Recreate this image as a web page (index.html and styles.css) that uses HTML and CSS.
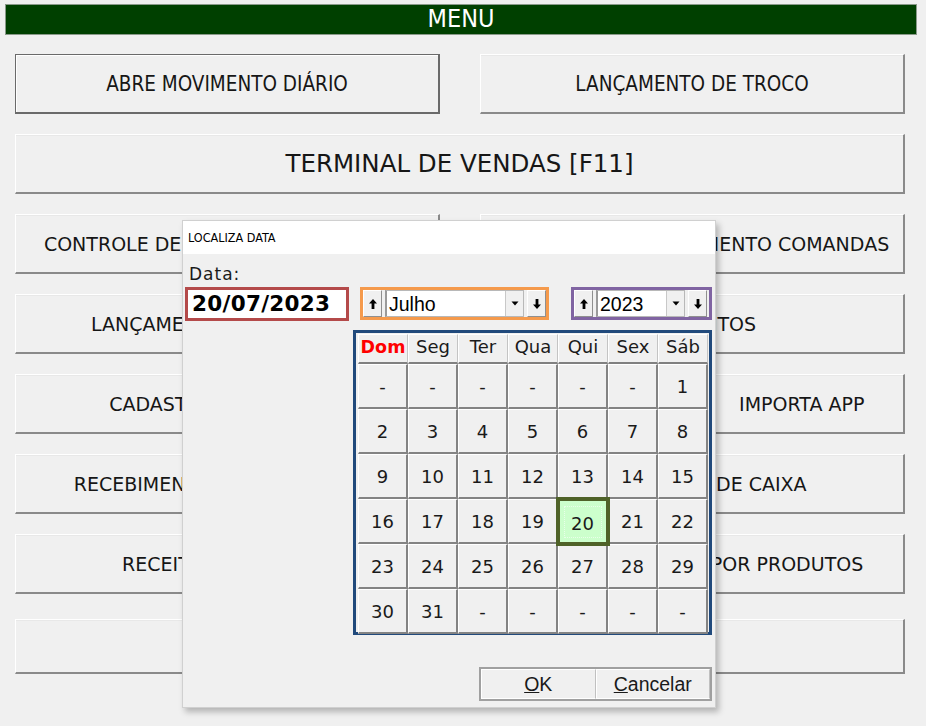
FILE: index.html
```html
<!DOCTYPE html>
<html lang="pt-BR">
<head>
<meta charset="utf-8">
<title>Menu</title>
<link rel="stylesheet" href="styles.css">
</head>
<body>
<div class="screen">
  <div class="header">MENU</div>
  <div class="menu">
    <button class="mbtn focused">ABRE MOVIMENTO DIÁRIO</button>
    <button class="mbtn">LANÇAMENTO DE TROCO</button>
    <button class="mbtn wide big">TERMINAL DE VENDAS [F11]</button>
    <button class="mbtn v">CONTROLE DE CONTAS DOS CLIENTES</button>
    <button class="mbtn v">CONTROLE DE LANÇAMENTO COMANDAS</button>
    <button class="mbtn v">LANÇAMENTO DE DESPESAS</button>
    <button class="mbtn v">VER DÉBITOS</button>
    <button class="mbtn v">CADASTRO DE CLIENTES</button>
    <div class="split">
      <button class="mbtn v">EXPORTA APP</button>
      <button class="mbtn v">IMPORTA APP</button>
    </div>
    <button class="mbtn v">RECEBIMENTOS DE CREDIÁRIOS</button>
    <button class="mbtn v">FECHAMENTO DE CAIXA</button>
    <button class="mbtn v">RECEITAS - DESPESAS</button>
    <button class="mbtn v">CONSULTA VENDAS POR PRODUTOS</button>
    <button class="mbtn last"></button>
    <button class="mbtn last"></button>
  </div>

  <div class="dialog">
    <div class="dlg-title">LOCALIZA DATA</div>
    <div class="dlg-body">
      <div class="lbl">Data:</div>
      <div class="ctrl-row">
        <div class="date-box"><span class="date-val">20/07/2023</span></div>
        <div class="month-box">
          <span class="arrow-btn"><svg width="10" height="12" viewBox="0 0 10 12"><path d="M5 1 L1 5.5 H3.6 V11 H6.4 V5.5 H9 Z" fill="#000"/></svg></span>
          <span class="combo combo-month"><span class="combo-text">Julho</span><span class="drop"><svg width="8" height="5" viewBox="0 0 8 5"><path d="M0.5 0.5 H7.5 L4 4.5 Z" fill="#000"/></svg></span></span>
          <span class="arrow-btn"><svg width="10" height="12" viewBox="0 0 10 12"><path d="M5 11 L1 6.5 H3.6 V1 H6.4 V6.5 H9 Z" fill="#000"/></svg></span>
        </div>
        <div class="year-box">
          <span class="arrow-btn"><svg width="10" height="12" viewBox="0 0 10 12"><path d="M5 1 L1 5.5 H3.6 V11 H6.4 V5.5 H9 Z" fill="#000"/></svg></span>
          <span class="combo combo-year"><span class="combo-text">2023</span><span class="drop"><svg width="8" height="5" viewBox="0 0 8 5"><path d="M0.5 0.5 H7.5 L4 4.5 Z" fill="#000"/></svg></span></span>
          <span class="arrow-btn"><svg width="10" height="12" viewBox="0 0 10 12"><path d="M5 11 L1 6.5 H3.6 V1 H6.4 V6.5 H9 Z" fill="#000"/></svg></span>
        </div>
      </div>
      <div class="calendar">
        <div class="cal-grid">
          <div class="hd dom">Dom</div><div class="hd">Seg</div><div class="hd">Ter</div><div class="hd">Qua</div><div class="hd">Qui</div><div class="hd">Sex</div><div class="hd">Sáb</div>
          <div class="d">-</div><div class="d">-</div><div class="d">-</div><div class="d">-</div><div class="d">-</div><div class="d">-</div><div class="d">1</div>
          <div class="d">2</div><div class="d">3</div><div class="d">4</div><div class="d">5</div><div class="d">6</div><div class="d">7</div><div class="d">8</div>
          <div class="d">9</div><div class="d">10</div><div class="d">11</div><div class="d">12</div><div class="d">13</div><div class="d">14</div><div class="d">15</div>
          <div class="d">16</div><div class="d">17</div><div class="d">18</div><div class="d">19</div><div class="d sel"><span class="focus">20</span></div><div class="d">21</div><div class="d">22</div>
          <div class="d">23</div><div class="d">24</div><div class="d">25</div><div class="d">26</div><div class="d">27</div><div class="d">28</div><div class="d">29</div>
          <div class="d">30</div><div class="d">31</div><div class="d">-</div><div class="d">-</div><div class="d">-</div><div class="d">-</div><div class="d">-</div>
        </div>
      </div>
      <div class="dlg-btns">
        <button class="dbtn"><u>O</u>K</button>
        <button class="dbtn"><u>C</u>ancelar</button>
      </div>
    </div>
  </div>
</div>
</body>
</html>
```

FILE: styles.css
```css
* { box-sizing: border-box; }

html, body {
  margin: 0;
  padding: 0;
  width: 926px;
  height: 726px;
  overflow: hidden;
  background: #f0f0f0;
}

.screen {
  position: relative;
  width: 926px;
  height: 726px;
  padding: 4px 0 0 5px;
  font-family: "DejaVu Sans Condensed", "DejaVu Sans", sans-serif;
  color: #1a1a1a;
}

.header {
  width: 912px;
  height: 31px;
  background: #004000;
  border: 1px solid #8a9a8a;
  color: #ffffff;
  font-size: 25px;
  line-height: 28px;
  text-align: center;
}

.menu {
  display: grid;
  grid-template-columns: 425px 425px;
  column-gap: 40px;
  row-gap: 20px;
  grid-auto-rows: 60px;
  margin: 19px 0 0 10px;
}

.mbtn {
  margin: 0;
  padding: 0;
  background: #f0f0f0;
  border-top: 1px solid #ffffff;
  border-left: 1px solid #ffffff;
  border-right: 2px solid #8a8a8a;
  border-bottom: 2px solid #8a8a8a;
  box-shadow: inset 0 1px 0 #e8e8e8;
  font-family: "DejaVu Sans Condensed", "DejaVu Sans", sans-serif;
  font-size: 20.5px;
  color: #161616;
  white-space: nowrap;
  overflow: hidden;
  text-align: center;
}

.mbtn.v {
  font-family: "DejaVu Sans", sans-serif;
  font-size: 19px;
}

.mbtn.focused {
  border: 1px solid #6a6a6a;
  border-right: 2px solid #6a6a6a;
  border-bottom: 2px solid #6a6a6a;
  box-shadow: inset 1px 1px 0 #ffffff;
}

.mbtn.wide { grid-column: 1 / 3; }

.mbtn.big {
  font-family: "DejaVu Sans", sans-serif;
  font-size: 24.5px;
}

.mbtn.last { margin-top: 5px; }

.split {
  display: flex;
  gap: 14px;
}

.split .mbtn { flex: 1; }

/* Dialog */
.dialog {
  position: absolute;
  left: 182px;
  top: 220px;
  width: 534px;
  height: 488px;
  background: #f0f0f0;
  border: 1px solid #d0d0d0;
  box-shadow: 3px 4px 6px rgba(0, 0, 0, 0.25);
}

.dlg-title {
  height: 33px;
  background: #ffffff;
  padding: 9px 0 0 5px;
  font-family: "DejaVu Sans Condensed", "DejaVu Sans", sans-serif;
  font-size: 12.5px;
  color: #000;
}

.dlg-body {
  padding: 10px 0 0 2px;
}

.lbl {
  margin-left: 4px;
  height: 23px;
  font-family: "DejaVu Sans", sans-serif;
  font-size: 17px;
  letter-spacing: 1px;
  color: #1a1a1a;
}

.ctrl-row {
  display: flex;
  align-items: flex-start;
  height: 34px;
}

.date-box {
  width: 164px;
  height: 34px;
  border: 3px solid #b44a4a;
  background: #ffffff;
  padding: 0 0 0 4px;
  margin-right: 11px;
}

.date-val {
  font-family: "DejaVu Sans", sans-serif;
  font-weight: bold;
  font-size: 21.5px;
  line-height: 27px;
  color: #000;
  letter-spacing: 0.3px;
}

.month-box, .year-box {
  display: flex;
  align-items: center;
  gap: 3px;
  height: 33px;
  border: 3px solid #f59a4c;
}

.month-box { width: 189px; margin-right: 22px; }
.year-box { width: 141px; border-color: #8064a2; }

.arrow-btn {
  display: flex;
  align-items: center;
  justify-content: center;
  width: 19px;
  height: 27px;
  background: #f0f0f0;
  border-top: 1px solid #ffffff;
  border-left: 1px solid #ffffff;
  border-right: 1px solid #8f8f8f;
  border-bottom: 1px solid #8f8f8f;
}

.combo {
  display: flex;
  align-items: center;
  height: 27px;
  background: #ffffff;
  border: 1px solid #b8b8b8;
  border-left: 2px solid #9a9a9a;
}

.combo-month { width: 139px; }
.combo-year { width: 89px; }

.combo-text {
  flex: 1;
  padding: 2px 0 0 2px;
  font-family: "Liberation Sans", sans-serif;
  font-size: 19.5px;
  color: #000;
}

.drop {
  display: flex;
  align-items: center;
  justify-content: center;
  width: 18px;
  height: 25px;
  background: #f0f0f0;
  border-left: 1px solid #c8c8c8;
}

.calendar {
  margin: 9px 0 0 168px;
  width: 359px;
  height: 305px;
  border: 3px solid #214a7c;
  background: #f0f0f0;
  padding: 1px 0 0 2px;
}

.cal-grid {
  display: grid;
  grid-template-columns: repeat(7, 50px);
  grid-template-rows: 30px repeat(6, 45px);
}

.hd, .d {
  display: flex;
  align-items: center;
  justify-content: center;
  font-family: "DejaVu Sans", sans-serif;
  font-size: 18px;
  color: #1a1a1a;
}

.hd {
  padding-bottom: 4px;
  border-left: 1px solid #ffffff;
  border-right: 1px solid #c4c4c4;
  border-bottom: 2px solid #808080;
  border-top: 1px solid #ffffff;
}

.hd.dom {
  color: #ff0000;
  font-weight: bold;
  font-size: 17.5px;
}

.d {
  border-top: 1px solid #ffffff;
  border-left: 1px solid #ffffff;
  border-right: 2px solid #838383;
  border-bottom: 2px solid #838383;
}

.d.sel {
  position: relative;
  z-index: 1;
  background: #ccffcc;
  outline: 4px solid #4f6228;
  outline-offset: -2px;
  padding-top: 5px;
}

.d.sel .focus {
  display: flex;
  align-items: center;
  justify-content: center;
  width: 38px;
  height: 32px;
  margin-top: -4px;
  padding-top: 4px;
  border: 1px dotted #e8ffe8;
}

.dlg-btns {
  display: flex;
  margin: 32px 0 0 294px;
  width: 233px;
  height: 34px;
  border: 2px solid #a0a0a0;
  background: #f0f0f0;
}

.dbtn {
  flex: 1;
  margin: 0;
  padding: 0;
  background: #f0f0f0;
  border: 1px solid #ffffff;
  border-right: 1px solid #c0c0c0;
  font-family: "Liberation Sans", sans-serif;
  font-size: 19.5px;
  color: #1a1a1a;
}
```
